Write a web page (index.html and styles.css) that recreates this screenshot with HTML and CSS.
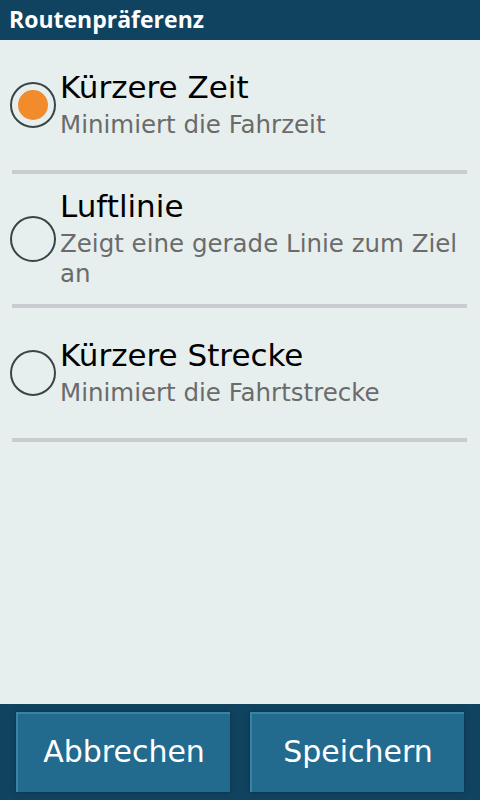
FILE: index.html
```html
<!DOCTYPE html>
<html lang="de">
<head>
    <meta charset="UTF-8" />
    <meta name="viewport" content="width=device-width, initial-scale=1.0" />
    <title>Routenpräferenz</title>
    <link rel="stylesheet" href="styles.css">
</head>
<body>

<div class="screen">
    <div class="header">Routenpräferenz</div>

    <!-- Options list -->
    <div class="options">
        <div class="option">
            <div class="radio checked"><div class="dot"></div></div>
            <div class="option-text">
                <div class="option-title">Kürzere Zeit</div>
                <div class="option-desc">Minimiert die Fahrzeit</div>
            </div>
        </div>
        <div class="separator"></div>
        <div class="option">
            <div class="radio"></div>
            <div class="option-text">
                <div class="option-title">Luftlinie</div>
                <div class="option-desc">Zeigt eine gerade Linie zum Ziel an</div>
            </div>
        </div>
        <div class="separator"></div>
        <div class="option">
            <div class="radio"></div>
            <div class="option-text">
                <div class="option-title">Kürzere Strecke</div>
                <div class="option-desc">Minimiert die Fahrtstrecke</div>
            </div>
        </div>
        <div class="separator"></div>
    </div>

    <!-- Bottom buttons -->
    <div class="footer">
        <button class="footer-btn">Abbrechen</button>
        <button class="footer-btn">Speichern</button>
    </div>
</div>

</body>
</html>
```

FILE: styles.css
```css
body {
    margin: 0;
    font-family: "DejaVu Sans", sans-serif;
    background-color: #e6efee;
}
.screen {
    width: 480px;
    height: 800px;
    display: flex;
    flex-direction: column;
}
.header {
    height: 40px;
    background-color: #10435f;
    color: #fff;
    font-family: "Open Sans", sans-serif;
    font-weight: bold;
    font-size: 23px;
    line-height: 38px;
    padding-left: 9px;
}
.options {
    flex: 1;
}
.option {
    height: 130px;
    display: flex;
    align-items: center;
    padding-left: 10px;
}
.radio {
    width: 42px;
    height: 42px;
    border: 2px solid #374646;
    border-radius: 50%;
    flex-shrink: 0;
    display: flex;
    align-items: center;
    justify-content: center;
    margin-right: 4px;
}
.dot {
    width: 30px;
    height: 30px;
    border-radius: 50%;
    background-color: #f28b2b;
}
.option-text {
    padding-right: 12px;
    padding-bottom: 3px;
}
.option-title {
    font-size: 31px;
    line-height: 39px;
    margin-bottom: 3px;
    color: #000;
}
.option-desc {
    font-size: 24.5px;
    line-height: 30px;
    color: #6b6b6b;
}
.separator {
    height: 4px;
    margin: 0 13px 0 12px;
    background-color: #c8ccd0;
}
.footer {
    height: 96px;
    box-sizing: border-box;
    padding: 8px 16px;
    background-color: #10435f;
    display: flex;
    gap: 20px;
}
.footer-btn {
    flex: 1;
    margin: 0;
    font-family: "DejaVu Sans", sans-serif;
    font-size: 30px;
    color: #fff;
    background-color: #226b8e;
    border: none;
    border-top: 2px solid #3a83a5;
    border-left: 2px solid #3a83a5;
    box-shadow: 0 0 4px #0a3048;
    padding: 0 0 4px;
}
```
